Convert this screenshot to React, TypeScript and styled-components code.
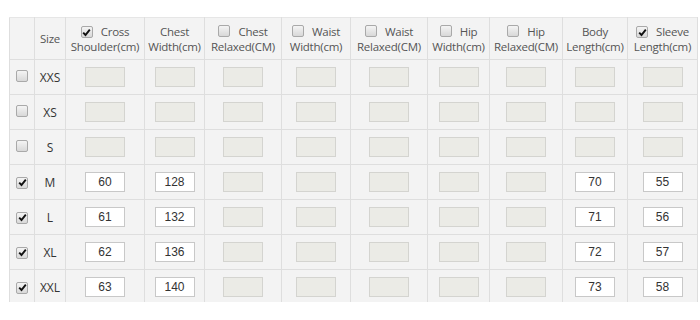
import React from 'react';
import styled, { createGlobalStyle } from 'styled-components';

const GlobalStyle = createGlobalStyle`
  html, body {
    margin: 0;
    padding: 0;
    background: #ffffff;
  }
`;

const Page = styled.div`
  padding: 17px 0 0 9px;
  width: 700px;
  height: 320px;
  box-sizing: border-box;
`;

const Frame = styled.div`
  width: 691px;
  height: 285px;
  overflow: hidden;
`;

const Table = styled.table`
  border-collapse: collapse;
  table-layout: fixed;
  width: 689px;
  background: #f3f3f3;
  font-family: 'Open Sans', 'Noto Sans', sans-serif;
`;

const HeadCell = styled.th<{ $w: number }>`
  width: ${(p) => p.$w - 1}px;
  height: 41px;
  padding: 0;
  border: 1px solid #dedede;
  border-top-color: #e6e6e6;
  font-weight: normal;
  font-size: 11.5px;
  line-height: 15px;
  color: #555;
  text-align: center;
  vertical-align: middle;
  white-space: nowrap;
  letter-spacing: -0.25px;
  overflow: hidden;
`;

const Cell = styled.td`
  height: 34px;
  padding: 0;
  border: 1px solid #dedede;
  text-align: center;
  vertical-align: middle;
  font-family: 'Liberation Sans', Arial, sans-serif;
  font-size: 12px;
  color: #333;
`;

const SizeLabel = styled.span`
  font-family: 'Open Sans', 'Noto Sans', sans-serif;
  font-size: 12px;
  color: #333;
`;

const Field = styled.div<{ $on: boolean }>`
  width: 40px;
  height: 20px;
  margin: 0 auto;
  box-sizing: border-box;
  border: 1px solid ${(p) => (p.$on ? '#c8c8c8' : '#d4d4d0')};
  background: ${(p) => (p.$on ? '#ffffff' : '#ebebe6')};
  line-height: 18px;
  font-size: 12px;
  color: #333;
`;

const Box = styled.span`
  display: inline-flex;
  align-items: center;
  justify-content: center;
  width: 12px;
  height: 12px;
  box-sizing: border-box;
  border: 1px solid #a9a9a9;
  border-radius: 2px;
  background: linear-gradient(#f4f4f4, #d8d8d8);
  vertical-align: -1px;
`;

const Gap = styled.span`
  display: inline-block;
  width: 8px;
`;

const Check = ({ on }: { on: boolean }) => (
  <Box>
    {on && (
      <svg width="9" height="9" viewBox="0 0 9 9">
        <path d="M1.2 4.6 L3.5 7 L7.8 1.6" fill="none" stroke="#111" strokeWidth="1.9" />
      </svg>
    )}
  </Box>
);

type Col = { top: string; bottom: string; w: number; box?: boolean; on: boolean; key?: string };

const columns: Col[] = [
  { top: 'Cross', bottom: 'Shoulder(cm)', w: 79, box: true, on: true, key: 'cs' },
  { top: 'Chest', bottom: 'Width(cm)', w: 60, on: true, key: 'cw' },
  { top: 'Chest', bottom: 'Relaxed(CM)', w: 77, box: true, on: false },
  { top: 'Waist', bottom: 'Width(cm)', w: 69, box: true, on: false },
  { top: 'Waist', bottom: 'Relaxed(CM)', w: 77, box: true, on: false },
  { top: 'Hip', bottom: 'Width(cm)', w: 62, box: true, on: false },
  { top: 'Hip', bottom: 'Relaxed(CM)', w: 73, box: true, on: false },
  { top: 'Body', bottom: 'Length(cm)', w: 65, on: true, key: 'bl' },
  { top: 'Sleeve', bottom: 'Length(cm)', w: 70, box: true, on: true, key: 'sl' },
];

type Row = { size: string; vals?: Record<string, number> };

const rows: Row[] = [
  { size: 'XXS' },
  { size: 'XS' },
  { size: 'S' },
  { size: 'M', vals: { cs: 60, cw: 128, bl: 70, sl: 55 } },
  { size: 'L', vals: { cs: 61, cw: 132, bl: 71, sl: 56 } },
  { size: 'XL', vals: { cs: 62, cw: 136, bl: 72, sl: 57 } },
  { size: 'XXL', vals: { cs: 63, cw: 140, bl: 73, sl: 58 } },
];

const App: React.FC = () => {
  return (
    <Page>
      <GlobalStyle />
      <Frame>
        <Table>
          <thead>
            <tr>
              <HeadCell $w={25} />
              <HeadCell $w={31}>Size</HeadCell>
              {columns.map((c, i) => (
                <HeadCell key={i} $w={c.w}>
                  {c.box && (
                    <>
                      <Check on={c.on} />
                      <Gap />
                    </>
                  )}
                  {c.top}
                  <br />
                  {c.bottom}
                </HeadCell>
              ))}
            </tr>
          </thead>
          <tbody>
            {rows.map((r) => (
              <tr key={r.size}>
                <Cell>
                  <Check on={!!r.vals} />
                </Cell>
                <Cell>
                  <SizeLabel>{r.size}</SizeLabel>
                </Cell>
                {columns.map((c, i) => {
                  const v = r.vals && c.key ? r.vals[c.key] : undefined;
                  return (
                    <Cell key={i}>
                      <Field $on={v !== undefined}>{v}</Field>
                    </Cell>
                  );
                })}
              </tr>
            ))}
          </tbody>
        </Table>
      </Frame>
    </Page>
  );
};

export default App;
